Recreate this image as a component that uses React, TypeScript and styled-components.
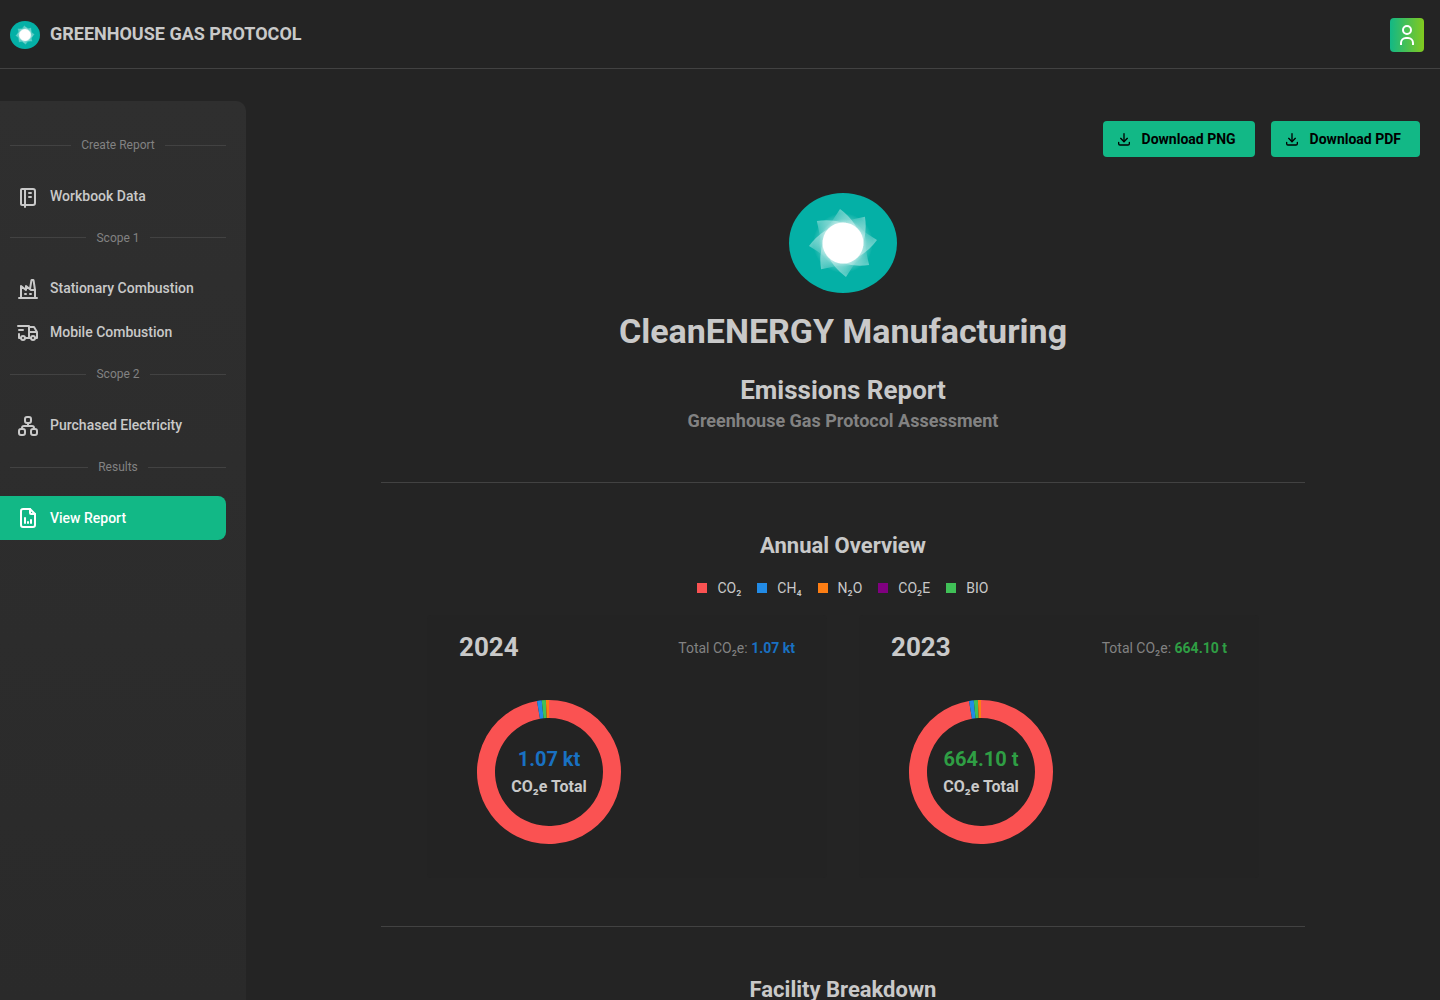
import React from 'react';
import styled, { createGlobalStyle } from 'styled-components';
import {
  TbBuildingFactory2,
  TbDownload,
  TbFileAnalytics,
  TbNotebook,
  TbSitemap,
  TbTruckDelivery,
} from 'react-icons/tb';

const GlobalStyle = createGlobalStyle`
  *, *::before, *::after { box-sizing: border-box; }
  body {
    margin: 0;
    height: 1000px;
    overflow: hidden;
    background: #242424;
    color: #c9c9c9;
    font-family: Roboto, "Liberation Sans", sans-serif;
    font-size: 14px;
    line-height: 1.55;
    -webkit-font-smoothing: antialiased;
  }
  h1, h2, h3, h4, p { margin: 0; }
`;

const Page = styled.div`
  display: flex;
  flex-direction: column;
  height: 1000px;
  overflow: hidden;
`;

const Header = styled.header`
  display: flex;
  flex: none;
  align-items: center;
  justify-content: space-between;
  height: 69px;
  padding: 1px 16px 0 10px;
  border-bottom: 1px solid #424242;
`;

const Brand = styled.div`
  display: flex;
  align-items: center;
  gap: 10px;
`;

const BrandName = styled.span`
  font-size: 18px;
  font-weight: 700;
  line-height: 26px;
  margin-bottom: 2px;
`;

const UserButton = styled.button`
  display: flex;
  align-items: center;
  justify-content: center;
  width: 34px;
  height: 34px;
  padding: 0;
  border: 0;
  border-radius: 4px;
  color: #fff;
  background: linear-gradient(90deg, #12b886 0%, #82c91e 100%);
`;

const Body = styled.div`
  display: flex;
  flex: 1;
  min-height: 0;
  padding-top: 32px;
`;

const Sidebar = styled.nav`
  flex: none;
  width: 246px;
  padding: 25px 20px 0 0;
  border-top-right-radius: 10px;
  background: linear-gradient(180deg, #2f2f2f 0%, #2a2a2a 100%);
`;

const NavDivider = styled.div`
  display: flex;
  align-items: center;
  gap: 10px;
  height: 18.6px;
  margin: 10px 0 20px 10px;
  color: #828282;
  font-size: 12px;

  &::before,
  &::after {
    content: '';
    flex: 1;
    height: 1px;
    background: #424242;
  }
`;

const NavItem = styled.a<{ $active?: boolean }>`
  display: flex;
  align-items: center;
  gap: 10px;
  height: 44px;
  padding-left: 16px;
  border-radius: 0 8px 8px 0;
  font-weight: 500;
  color: ${(p) => (p.$active ? '#fff' : '#c9c9c9')};
  background: ${(p) => (p.$active ? '#12b886' : 'transparent')};

  svg { flex: none; }
`;

const Main = styled.main`
  display: flex;
  flex: 1;
  flex-direction: column;
  align-items: center;
  padding-top: 20px;
`;

const Actions = styled.div`
  display: flex;
  flex: none;
  align-self: flex-end;
  gap: 16px;
  margin-right: 20px;
`;

const ActionButton = styled.button`
  display: flex;
  align-items: center;
  gap: 10px;
  height: 36px;
  padding: 0 19px 0 13px;
  border: 0;
  border-radius: 4px;
  background: #12b886;
  color: #000;
  font: 700 14px Roboto, "Liberation Sans", sans-serif;
`;

const Report = styled.article`
  display: flex;
  flex: none;
  flex-direction: column;
  align-items: center;
  width: 924px;
  padding-top: 36px;
`;

const CompanyName = styled.h1`
  margin-top: 16px;
  font-size: 34px;
  font-weight: 700;
  line-height: 44px;
`;

const ReportName = styled.h2`
  margin-top: 20px;
  font-size: 26px;
  font-weight: 700;
  line-height: 35px;
`;

const Subtitle = styled.h4`
  color: #828282;
  font-size: 18px;
  font-weight: 700;
  line-height: 26px;
`;

const Rule = styled.hr`
  flex: none;
  width: 100%;
  height: 1px;
  margin: 48px 0;
  border: 0;
  background: #424242;
`;

const SectionTitle = styled.h3`
  font-size: 22px;
  font-weight: 700;
  line-height: 30px;
`;

const Legend = styled.div`
  display: flex;
  gap: 16px;
  margin-top: 16px;
  padding-right: 0.2px;
`;

const LegendEntry = styled.div`
  display: flex;
  align-items: center;
  gap: 10px;
  line-height: 22px;
`;

const Swatch = styled.span<{ $color: string }>`
  width: 10px;
  height: 10px;
  background: ${(p) => p.$color};
`;

const Years = styled.div`
  display: flex;
  gap: 32px;
  margin-top: 16px;
`;

const YearCard = styled.section`
  display: flex;
  flex-direction: column;
  width: 400px;
  height: 263px;
  padding: 14px 32px 0;
  border-radius: 4px;
  background: #232323;
`;

const YearHeader = styled.div`
  display: flex;
  align-items: center;
  justify-content: space-between;
  height: 36px;
`;

const Year = styled.h2`
  font-size: 26px;
  font-weight: 700;
  line-height: 35px;
`;

const Total = styled.p`
  padding-top: 4px;
  color: #828282;
`;

const TotalValue = styled.span<{ $color: string }>`
  color: ${(p) => p.$color};
  font-weight: 700;
`;

const Donut = styled.div`
  display: grid;
  place-items: center;
  width: 180px;
  height: 180px;
  margin-top: 17px;

  > * { grid-area: 1 / 1; }
`;

const DonutLabel = styled.div`
  display: flex;
  flex-direction: column;
  align-items: center;
  padding-bottom: 2px;
  font-size: 16px;
  font-weight: 700;
  line-height: 25px;
`;

const DonutValue = styled.span<{ $color: string }>`
  color: ${(p) => p.$color};
  font-size: 20px;
  line-height: 30px;
`;

function UserIcon() {
  return (
    <svg width="24" height="24" viewBox="0 0 24 24" fill="none" stroke="currentColor" strokeWidth="2">
      <circle cx="12" cy="7" r="4" />
      <path d="M6 22v-2a5 5 0 0 1 5-5h2a5 5 0 0 1 5 5v2" />
    </svg>
  );
}

function Logo({ width, height }: { width: number; height: number }) {
  const blade = `blade-${width}`;
  const halo = `halo-${width}`;
  return (
    <svg width={width} height={height} viewBox="0 0 108 100" preserveAspectRatio="none">
      <defs>
        <linearGradient id={blade} gradientUnits="userSpaceOnUse" x1="64" y1="29" x2="49" y2="42">
          <stop offset="0" stopColor="#fff" stopOpacity="0.4" />
          <stop offset="0.5" stopColor="#fff" stopOpacity="0.2" />
          <stop offset="1" stopColor="#fff" stopOpacity="0" />
        </linearGradient>
        <radialGradient id={halo} gradientUnits="userSpaceOnUse" cx="54" cy="50" r="30">
          <stop offset="0.66" stopColor="#fff" stopOpacity="0.55" />
          <stop offset="0.8" stopColor="#fff" stopOpacity="0.2" />
          <stop offset="1" stopColor="#fff" stopOpacity="0" />
        </radialGradient>
      </defs>
      <ellipse cx="54" cy="50" rx="54" ry="50" fill="#04b0a6" />
      <circle cx="54" cy="50" r="30" fill={`url(#${halo})`} />
      {[0, 45, 90, 135, 180, 225, 270, 315].map((a) => (
        <path
          key={a}
          d="M51 16Q69 29 75 53L54 50L35 38Q44 28 51 16Z"
          fill={`url(#${blade})`}
          transform={`rotate(${a} 54 50)`}
        />
      ))}
      <circle cx="54" cy="50" r="20.5" fill="#fff" />
    </svg>
  );
}

const segments = [
  { color: '#fa5252', from: 0, to: 350.4 },
  { color: '#228be6', from: 350.4, to: 354.2 },
  { color: '#40c057', from: 354.2, to: 357.5 },
  { color: '#fd7e14', from: 357.5, to: 360 },
];

function Ring() {
  const point = (deg: number) => {
    const t = (deg * Math.PI) / 180;
    return `${90 + 63 * Math.sin(t)} ${90 - 63 * Math.cos(t)}`;
  };
  return (
    <svg width="180" height="180" viewBox="0 0 180 180" fill="none" strokeWidth="18">
      {segments.map((s) => (
        <path
          key={s.color}
          stroke={s.color}
          d={`M${point(s.from)}A63 63 0 ${s.to - s.from > 180 ? 1 : 0} 1 ${point(s.to)}`}
        />
      ))}
    </svg>
  );
}

const gases = [
  { label: 'CO₂', color: '#fa5252' },
  { label: 'CH₄', color: '#228be6' },
  { label: 'N₂O', color: '#fd7e14' },
  { label: 'CO₂E', color: '#800080' },
  { label: 'BIO', color: '#40c057' },
];

const years = [
  { year: '2024', total: '1.07 kt', color: '#1971c2' },
  { year: '2023', total: '664.10 t', color: '#2f9e44' },
];

export default function App() {
  return (
    <Page>
      <GlobalStyle />
      <Header>
        <Brand>
          <Logo width={30} height={28} />
          <BrandName>GREENHOUSE GAS PROTOCOL</BrandName>
        </Brand>
        <UserButton aria-label="Account">
          <UserIcon />
        </UserButton>
      </Header>
      <Body>
        <Sidebar>
          <NavDivider>Create Report</NavDivider>
          <NavItem><TbNotebook size={24} />Workbook Data</NavItem>
          <NavDivider>Scope 1</NavDivider>
          <NavItem><TbBuildingFactory2 size={24} />Stationary Combustion</NavItem>
          <NavItem><TbTruckDelivery size={24} />Mobile Combustion</NavItem>
          <NavDivider>Scope 2</NavDivider>
          <NavItem><TbSitemap size={24} />Purchased Electricity</NavItem>
          <NavDivider>Results</NavDivider>
          <NavItem $active><TbFileAnalytics size={24} />View Report</NavItem>
        </Sidebar>
        <Main>
          <Actions>
            <ActionButton><TbDownload size={16} />Download PNG</ActionButton>
            <ActionButton><TbDownload size={16} />Download PDF</ActionButton>
          </Actions>
          <Report>
            <Logo width={108} height={100} />
            <CompanyName>CleanENERGY Manufacturing</CompanyName>
            <ReportName>Emissions Report</ReportName>
            <Subtitle>Greenhouse Gas Protocol Assessment</Subtitle>
            <Rule />
            <SectionTitle>Annual Overview</SectionTitle>
            <Legend>
              {gases.map((g) => (
                <LegendEntry key={g.label}>
                  <Swatch $color={g.color} />
                  {g.label}
                </LegendEntry>
              ))}
            </Legend>
            <Years>
              {years.map((y) => (
                <YearCard key={y.year}>
                  <YearHeader>
                    <Year>{y.year}</Year>
                    <Total>
                      Total CO₂e: <TotalValue $color={y.color}>{y.total}</TotalValue>
                    </Total>
                  </YearHeader>
                  <Donut>
                    <Ring />
                    <DonutLabel>
                      <DonutValue $color={y.color}>{y.total}</DonutValue>
                      CO₂e Total
                    </DonutLabel>
                  </Donut>
                </YearCard>
              ))}
            </Years>
            <Rule />
            <SectionTitle>Facility Breakdown</SectionTitle>
          </Report>
        </Main>
      </Body>
    </Page>
  );
}
